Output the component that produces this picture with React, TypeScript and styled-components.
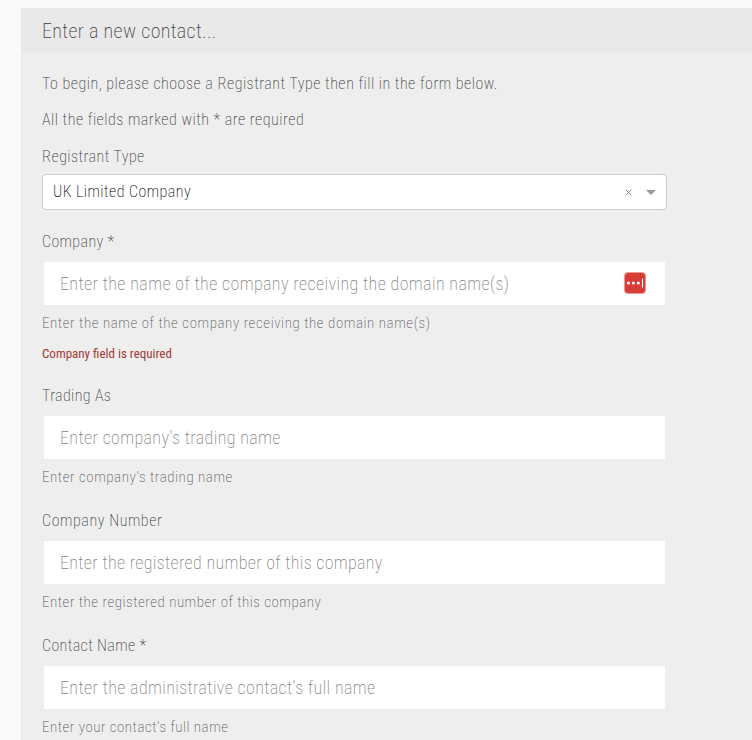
import React from "react";
import styled, { createGlobalStyle } from "styled-components";

const GlobalStyle = createGlobalStyle`
  * { box-sizing: border-box; }
  html, body { margin: 0; background: #f9f9f9; }
  body {
    height: 740px;
    overflow: hidden;
    font-family: Roboto, "Liberation Sans", sans-serif;
    font-stretch: 75%;
    font-weight: 200;
    color: #404040;
  }
`;

const Page = styled.div`
  height: 740px;
  padding: 8px 0 0 21px;
  overflow: hidden;
`;

const Panel = styled.section`
  min-height: 740px;
  background: #eee;
  border-left: 1px solid #e9e9e9;
`;

const PanelHeader = styled.header`
  height: 44px;
  padding-left: 20px;
  background: #e9e9e9;
  font-size: 20px;
  line-height: 46px;
  letter-spacing: 0.34px;
`;

const PanelBody = styled.div`
  width: 645px;
  padding: 20px 0 0 20px;
`;

const Intro = styled.p`
  margin: 0 0 12px;
  font-size: 16px;
  line-height: 24px;
  letter-spacing: 0.495px;
  white-space: nowrap;
`;

const Label = styled.label<{ $tracking?: number }>`
  display: block;
  font-size: 16px;
  line-height: 24px;
  letter-spacing: ${(p) => p.$tracking ?? 0.44}px;
`;

const SelectGroup = styled.div`
  margin: 13px 0 20px;
`;

const Select = styled.div`
  display: flex;
  align-items: center;
  height: 36px;
  margin-top: 5px;
  padding: 0 10px;
  background: #fff;
  border: 1px solid #ccc;
  border-radius: 4px;
  color: #000;
`;

const SelectValue = styled.span`
  flex: 1;
  font-size: 16px;
  line-height: 34px;
  letter-spacing: 0.45px;
`;

const ClearIcon = styled.svg`
  width: 7px;
  height: 7px;
  margin-right: 14px;
`;

const ArrowIcon = styled.svg`
  width: 10px;
  height: 5px;
`;

const FieldGroup = styled.div`
  margin-bottom: 20px;
`;

const InputBox = styled.div`
  display: flex;
  align-items: center;
  height: 43px;
  margin: 8px 2px 6px;
  padding-right: 19px;
  background: #fff;
`;

const Input = styled.input<{ $tracking: number }>`
  flex: 1;
  min-width: 0;
  height: 43px;
  padding: 0 0 1px 16px;
  border: 0;
  outline: 0;
  background: transparent;
  font: inherit;
  font-size: 18px;
  letter-spacing: ${(p) => p.$tracking}px;
  &::placeholder { color: #858585; opacity: 1; }
`;

const Help = styled.div<{ $tracking: number }>`
  font-size: 15px;
  line-height: 24px;
  letter-spacing: ${(p) => p.$tracking}px;
  color: #5a5a5a;
`;

const ErrorText = styled.div`
  height: 21px;
  margin-top: 8px;
  font-size: 13px;
  font-weight: 400;
  line-height: 22px;
  color: #a33a38;
`;

const ManagerIcon = styled.svg`
  width: 22px;
  height: 22px;
  margin-bottom: 1px;
`;

type FieldData = {
  label: string;
  labelTracking?: number;
  placeholder: string;
  inputTracking: number;
  help: string;
  helpTracking: number;
  error?: string;
  manager?: boolean;
};

const fields: FieldData[] = [
  {
    label: "Company *",
    labelTracking: 0.38,
    placeholder: "Enter the name of the company receiving the domain name(s)",
    inputTracking: 0.37,
    help: "Enter the name of the company receiving the domain name(s)",
    helpTracking: 0.55,
    error: "Company field is required",
    manager: true,
  },
  {
    label: "Trading As",
    labelTracking: 0.38,
    placeholder: "Enter company's trading name",
    inputTracking: 0.35,
    help: "Enter company's trading name",
    helpTracking: 0.54,
  },
  {
    label: "Company Number",
    labelTracking: 0.58,
    placeholder: "Enter the registered number of this company",
    inputTracking: 0.31,
    help: "Enter the registered number of this company",
    helpTracking: 0.5,
  },
  {
    label: "Contact Name *",
    labelTracking: 0.37,
    placeholder: "Enter the administrative contact's full name",
    inputTracking: 0.35,
    help: "Enter your contact's full name",
    helpTracking: 0.49,
  },
];

const PasswordManagerIcon = () => (
  <ManagerIcon viewBox="0 0 22 22" aria-hidden="true">
    <rect x="0.5" y="0.5" width="21" height="21" rx="3.5" fill="#d83c38" stroke="#ea9996" />
    <circle cx="4.4" cy="11" r="1.55" fill="#fff" />
    <circle cx="9.4" cy="11" r="1.55" fill="#fff" />
    <circle cx="14.4" cy="11" r="1.55" fill="#fff" />
    <path d="M18.5 6.5v9" stroke="#fff" strokeWidth="1.1" />
  </ManagerIcon>
);

const Field = ({ data }: { data: FieldData }) => (
  <FieldGroup>
    <Label $tracking={data.labelTracking}>{data.label}</Label>
    <InputBox>
      <Input placeholder={data.placeholder} $tracking={data.inputTracking} />
      {data.manager && <PasswordManagerIcon />}
    </InputBox>
    <Help $tracking={data.helpTracking}>{data.help}</Help>
    {data.error && <ErrorText>{data.error}</ErrorText>}
  </FieldGroup>
);

export default function App() {
  return (
    <>
      <GlobalStyle />
      <Page>
        <Panel>
          <PanelHeader>Enter a new contact...</PanelHeader>
          <PanelBody>
            <Intro>To begin, please choose a Registrant Type then fill in the form below.</Intro>
            <Intro>All the fields marked with * are required</Intro>
            <SelectGroup>
              <Label>Registrant Type</Label>
              <Select>
                <SelectValue>UK Limited Company</SelectValue>
                <ClearIcon viewBox="0 0 7 7">
                  <path d="M0.7 0.7l5.6 5.6M6.3 0.7l-5.6 5.6" stroke="#888" strokeWidth="1" fill="none" />
                </ClearIcon>
                <ArrowIcon viewBox="0 0 10 5">
                  <path d="M0 0h10L5 5z" fill="#999" />
                </ArrowIcon>
              </Select>
            </SelectGroup>
            {fields.map((f) => (
              <Field key={f.label} data={f} />
            ))}
          </PanelBody>
        </Panel>
      </Page>
    </>
  );
}
